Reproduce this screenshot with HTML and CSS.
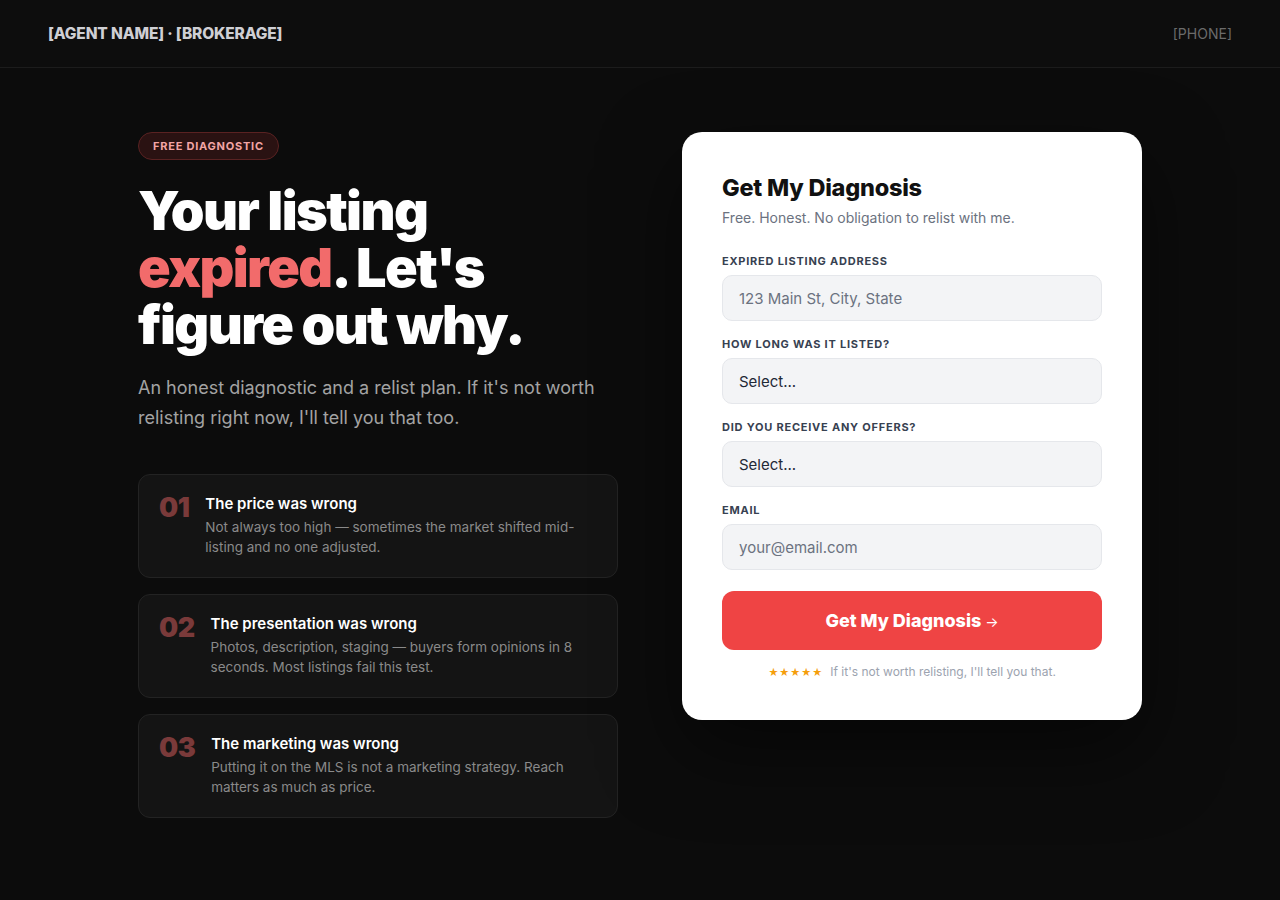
FILE: index.html
```html
<!DOCTYPE html>
<html lang="en">
<head>
<meta charset="utf-8">
<title>Expired Listing Diagnostic</title>
<link rel="stylesheet" href="styles.css">
</head>
<body>
<header class="topbar">
  <div class="brand">[AGENT NAME] · [BROKERAGE]</div>
  <div class="phone">[PHONE]</div>
</header>
<main class="hero">
  <section class="intro">
    <span class="badge">FREE DIAGNOSTIC</span>
    <h1 class="headline">Your listing<br><span class="accent">expired</span>. Let's<br>figure out why.</h1>
    <p class="lede">An honest diagnostic and a relist plan. If it's not worth relisting right now, I'll tell you that too.</p>
    <div class="reasons">
      <div class="reason">
        <div class="num">01</div>
        <div class="reason-body">
          <div class="reason-title">The price was wrong</div>
          <div class="reason-text">Not always too high — sometimes the market shifted mid-listing and no one adjusted.</div>
        </div>
      </div>
      <div class="reason">
        <div class="num">02</div>
        <div class="reason-body">
          <div class="reason-title">The presentation was wrong</div>
          <div class="reason-text">Photos, description, staging — buyers form opinions in 8 seconds. Most listings fail this test.</div>
        </div>
      </div>
      <div class="reason">
        <div class="num">03</div>
        <div class="reason-body">
          <div class="reason-title">The marketing was wrong</div>
          <div class="reason-text">Putting it on the MLS is not a marketing strategy. Reach matters as much as price.</div>
        </div>
      </div>
    </div>
  </section>
  <section class="card">
    <h2 class="card-title">Get My Diagnosis</h2>
    <p class="card-sub">Free. Honest. No obligation to relist with me.</p>
    <form class="form">
      <div class="field">
        <label class="label">Expired listing address</label>
        <div class="input placeholder">123 Main St, City, State</div>
      </div>
      <div class="field">
        <label class="label">How long was it listed?</label>
        <div class="input">Select...</div>
      </div>
      <div class="field">
        <label class="label">Did you receive any offers?</label>
        <div class="input">Select...</div>
      </div>
      <div class="field">
        <label class="label">Email</label>
        <div class="input placeholder">your@email.com</div>
      </div>
      <button type="button" class="cta">Get My Diagnosis <span class="arrow">→</span></button>
      <p class="note"><span class="stars">★★★★★</span> If it's not worth relisting, I'll tell you that.</p>
    </form>
  </section>
</main>
</body>
</html>
```

FILE: styles.css
```css
* { box-sizing: border-box; }
html, body { margin: 0; padding: 0; }
body {
  background: #0c0c0c;
  color: #fff;
  font-family: Inter, "Liberation Sans", sans-serif;
  min-height: 900px;
}
.topbar {
  height: 68px;
  display: flex;
  align-items: center;
  justify-content: space-between;
  padding: 0 48px;
  border-bottom: 1px solid #1c1c1c;
  background: #0d0d0d;
}
.brand {
  font-family: Inter, sans-serif;
  font-weight: 800;
  font-size: 15.5px;
  color: #cfcfd4;
  letter-spacing: -0.01em;
}
.phone {
  font-size: 14px;
  color: #6b6b6b;
}
.hero {
  display: grid;
  grid-template-columns: 480px 460px;
  column-gap: 64px;
  justify-content: center;
  padding-top: 64px;
  align-items: start;
}
.badge {
  display: inline-block;
  padding: 7px 14px 6px;
  border-radius: 999px;
  background: #2a1212;
  border: 1px solid #5a2222;
  color: #f3a5a5;
  font-size: 11px;
  font-weight: 700;
  letter-spacing: 0.07em;
  line-height: 13px;
}
.headline {
  margin: 22px 0 0;
  font-family: Inter, sans-serif;
  font-weight: 900;
  font-size: 54px;
  line-height: 57px;
  letter-spacing: -0.03em;
  color: #fff;
}
.accent { color: #f26b6b; }
.lede {
  margin: 20px 0 0;
  font-size: 18px;
  line-height: 30px;
  color: #a3a3a3;
  max-width: 470px;
}
.reasons {
  margin-top: 41px;
  display: flex;
  flex-direction: column;
  gap: 16px;
}
.reason {
  display: flex;
  gap: 16px;
  background: #141414;
  border: 1px solid #232323;
  border-radius: 12px;
  padding: 18px 24px 20px 20px;
}
.num {
  font-weight: 900;
  font-size: 27px;
  line-height: 28px;
  color: #7a3a3a;
  letter-spacing: -0.02em;
  padding-top: 1px;
}
.reason-title {
  font-size: 15px;
  font-weight: 600;
  line-height: 22px;
  color: #fff;
  margin-bottom: 2px;
}
.reason-text {
  font-size: 13.5px;
  line-height: 20px;
  color: #8a8a8a;
}
.card {
  background: #fff;
  border-radius: 20px;
  padding: 40px;
  color: #111;
  box-shadow: 0 30px 80px rgba(0,0,0,0.5);
}
.card-title {
  margin: 2px 0 0;
  font-weight: 800;
  font-size: 23.5px;
  line-height: 28px;
  letter-spacing: -0.01em;
  color: #111;
}
.card-sub {
  margin: 6px 0 0;
  font-size: 14px;
  line-height: 20px;
  color: #6b7280;
}
.form { margin-top: 26px; }
.field { margin-bottom: 16px; }
.label {
  display: block;
  font-size: 11px;
  font-weight: 700;
  line-height: 14px;
  letter-spacing: 0.07em;
  text-transform: uppercase;
  color: #374151;
  margin-bottom: 7px;
}
.input {
  height: 46px;
  display: flex;
  align-items: center;
  padding: 0 16px;
  background: #f3f4f6;
  border: 1px solid #e5e7eb;
  border-radius: 10px;
  font-size: 15px;
  color: #1f2937;
}
.input.placeholder { color: #6b7280; }
.cta {
  display: block;
  width: 100%;
  height: 59px;
  margin-top: 21px;
  border: none;
  border-radius: 12px;
  background: #ef4444;
  color: #fff;
  font-family: Inter, sans-serif;
  font-weight: 800;
  font-size: 18px;
  letter-spacing: 0;
}
.arrow { font-size: 14px; font-weight: 400; }
.note {
  margin: 14px 0 0;
  text-align: center;
  font-size: 12px;
  line-height: 16px;
  color: #9ca3af;
}
.stars { color: #f59e0b; font-size: 10px; letter-spacing: 0.5px; margin-right: 4px; }
```
